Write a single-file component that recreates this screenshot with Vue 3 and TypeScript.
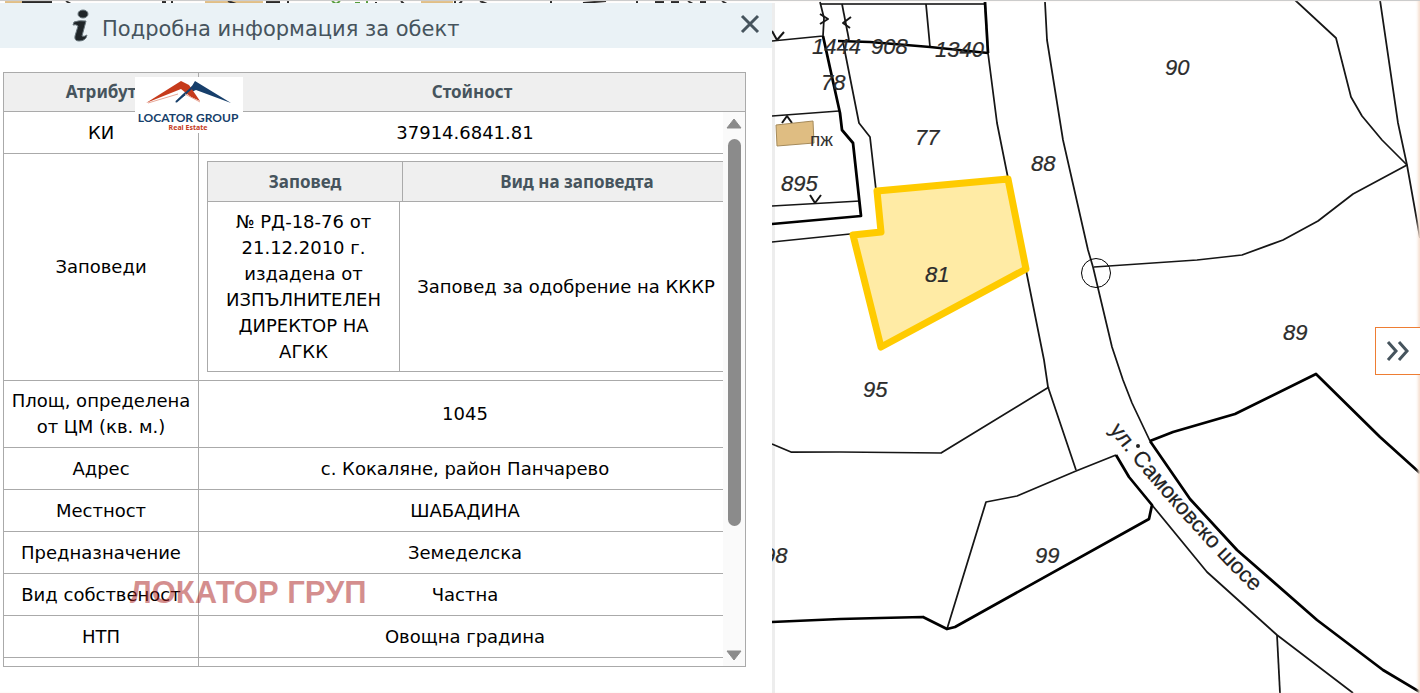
<script setup lang="ts">
interface Row { label: string; value: string }
interface Label { x: number; y: number; text: string }

const rows: Row[] = [
  { label: 'Площ, определена от ЦМ (кв. м.)', value: '1045' },
  { label: 'Адрес', value: 'с. Кокаляне, район Панчарево' },
  { label: 'Местност', value: 'ШАБАДИНА' },
  { label: 'Предназначение', value: 'Земеделска' },
  { label: 'Вид собственост', value: 'Частна' },
  { label: 'НТП', value: 'Овощна градина' },
  { label: '', value: '' },
]

const thinLines: string[] = [
  '820,2 824,18 823,36 772,41',
  '842,4 849,40',
  '843,42 859,123 870,137 876,190',
  '926,4 930,47',
  '988,53 997,123 1008,178',
  '1026,270 1044,360 1048,387 1076,470',
  '1045,2 1047,40 1063,140 1088,250 1093,267 1112,347 1123,380 1132,403 1150,441',
  '772,116 839,111',
  '772,206 860,201',
  '772,242 850,234',
  '1295,0 1336,38 1351,97 1362,116 1382,140 1407,165',
  '1380,0 1398,123 1407,165 1420,238',
  '1407,165 1353,194 1318,221 1283,240 1242,255 1197,260 1094,267',
  '1152,505 1207,572 1247,608 1277,635 1353,693',
  '1277,635 1280,693',
  '1116,455 1076,471 1017,496 986,502 947,629',
  '1049,387 941,453 840,452 791,452 772,444',
]
const thickLines: string[] = [
  '823,36 832,77 840,113 842,130 853,143 861,216 772,224',
  '838,41 870,42 930,47 988,53',
  '985,2 988,53',
  '1150,441 1173,432 1235,414 1316,374 1380,437 1420,473',
  '1150,441 1190,499 1237,550 1317,620 1383,670 1420,692',
  '1116,455 1129,477 1152,505 1149,519 955,627 947,629 923,617 880,618 840,619 772,622',
]
const marks: string[] = [
  '772,31 777,40 784,32',
  '782,123 787,116 792,123',
  '810,195 815,203 821,195',
  '820,14 828,19 820,24',
  '851,17 843,23 850,28',
]
const labels: Label[] = [
  { x: 812, y: 54, text: '1444' },
  { x: 871, y: 54, text: '908' },
  { x: 935, y: 57, text: '1340' },
  { x: 821, y: 90, text: '78' },
  { x: 915, y: 145, text: '77' },
  { x: 1031, y: 171, text: '88' },
  { x: 781, y: 191, text: '895' },
  { x: 1165, y: 75, text: '90' },
  { x: 1283, y: 340, text: '89' },
  { x: 925, y: 282, text: '81' },
  { x: 863, y: 397, text: '95' },
  { x: 1035, y: 563, text: '99' },
  { x: 763, y: 563, text: '98' },
]
</script>

<template>
  <main class="page" lang="bg">
    <svg class="map" viewBox="0 0 1420 693" preserveAspectRatio="xMinYMin slice" role="img" aria-label="Кадастрална карта">
      <g class="scraps">
        <path class="tan" d="M5 1H48V4H5ZM205 1H263V4H205ZM421 1H453V4H421Z" />
        <path class="ink" d="M22 2H52M66 1L71 4M162 2H166M172 1V4M228 1L236 4M266 2H280M288 1V4M376 2V4M401 1L404 4M455 1V4M462 1L459 4M480 1L487 4M551 1V4M583 3L606 1M637 1V4M655 2H664M671 2H679M688 1L693 4M700 2H706M722 1L727 4" />
        <path class="leaf" d="M332 1L336 4L340 1M355 3H360M367 1V4" />
      </g>
      <polyline class="edge" points="821,4 985,4" />
      <polyline v-for="p in thinLines" :key="p" class="thin" :points="p" />
      <polyline v-for="p in thickLines" :key="p" class="thick" :points="p" />
      <polyline v-for="p in marks" :key="p" class="mark" :points="p" />
      <polygon class="building" points="776,125 813,121 814,143 777,146" />
      <polygon class="selected" points="877,191 1008,179 1026,269 881,347 853,235 881,232" />
      <text v-for="l in labels" :key="l.text" class="num" :x="l.x" :y="l.y">{{ l.text }}</text>
      <text class="kind" x="810" y="146">пж</text>
      <path id="street" d="M1109 430L1127 453Q1170 505 1214 552T1277 611" fill="none" />
      <text class="street"><textPath href="#street">ул. Самоковско шосе</textPath></text>
      <circle class="dot" cx="1138" cy="446" r="2" />
      <circle class="cursor" cx="1096" cy="273" r="14.500" />
    </svg>

    <section class="panel">
      <header class="head">
        <svg class="info" viewBox="0 0 18 34" aria-hidden="true">
          <ellipse cx="11" cy="5" rx="5" ry="4" />
          <path d="M2 13Q7 11 14 12L10 27Q12 28 15 26Q14 32 7 32Q2 32 3 27L6 17Q4 15 1 16Z" />
        </svg>
        <h1>Подробна информация за обект</h1>
        <button class="close" type="button" aria-label="Затвори">
          <svg viewBox="0 0 20 20"><path d="M2 2L18 18M18 2L2 18" /></svg>
        </button>
      </header>

      <div class="content">
        <div class="grid">
          <table class="titles">
            <thead><tr><th class="first">Атрибут</th><th>Стойност</th></tr></thead>
          </table>
          <div class="scroll">
            <div class="view">
              <table class="data">
                <tbody>
                  <tr><th class="first" scope="row">КИ</th><td>37914.6841.81</td></tr>
                  <tr>
                    <th class="first" scope="row">Заповеди</th>
                    <td class="holder">
                      <table class="orders">
                        <thead><tr><th class="ohead">Заповед</th><th>Вид на заповедта</th></tr></thead>
                        <tbody>
                          <tr>
                            <td class="order">№ РД-18-76 от 21.12.2010 г. издадена от ИЗПЪЛНИТЕЛЕН ДИРЕКТОР НА АГКК</td>
                            <td class="type">Заповед за одобрение на КККР</td>
                          </tr>
                        </tbody>
                      </table>
                    </td>
                  </tr>
                  <tr v-for="r in rows" :key="r.label"><th class="first" scope="row">{{ r.label }}</th><td>{{ r.value }}</td></tr>
                </tbody>
              </table>
            </div>
            <div class="bar" aria-hidden="true">
              <svg viewBox="0 0 16 12"><path d="M8 1L15 10H1Z" /></svg>
              <div class="track"><div class="thumb"></div></div>
              <svg viewBox="0 0 16 12"><path d="M8 11L15 2H1Z" /></svg>
            </div>
          </div>
        </div>
      </div>
    </section>

    <svg class="logo" viewBox="0 0 108 56" role="img" aria-label="Locator Group">
      <rect width="108" height="56" fill="#fff" />
      <path d="M40 26Q46 18 57 9L60 4L96 26L61 13Q50 17 40 26Z" fill="#173f6b" />
      <path d="M11 26L46 4L54 8L65 24L56 20L46 12Z" fill="#c63b1c" />
      <path d="M41 25L60 8" stroke="#173f6b" stroke-width="2" />
      <path d="M13 26L43 17M50 17L65 25" fill="none" stroke="#e8a797" stroke-width="1" />
      <text class="brand" x="53" y="45">LOCATOR GROUP</text>
      <text class="sub" x="53" y="53">Real Estate</text>
    </svg>
    <div class="watermark">ЛОКАТОР ГРУП</div>

    <button class="expand" type="button" aria-label="Покажи панела">
      <svg viewBox="0 0 24 20"><path d="M2 1L10 10L2 19M13 1L21 10L13 19" /></svg>
    </button>
  </main>
</template>

<style>
body { margin: 0; background: #fff; }
</style>

<style scoped>
* { box-sizing: border-box; }
.page {
  position: relative;
  height: 100vh;
  overflow: hidden;
  padding-top: 3px;
  background: #fff;
  font-family: "DejaVu Sans", Verdana, sans-serif;
  font-size: 18px;
  line-height: 26px;
  color: #000;
}
.page::after {
  content: "";
  position: absolute;
  inset: 0;
  border-top: 1px solid #ccc;
  box-shadow: inset -3px 0 3px -1px #f6dfd0;
  pointer-events: none;
}
.map { position: absolute; inset: 0; width: 100%; height: 100%; }
.thin, .thick, .mark, .edge { fill: none; stroke: #161616; stroke-linejoin: round; }
.thin { stroke-width: 1.75; }
.thick { stroke-width: 2.75; stroke: #000; }
.mark { stroke-width: 2; }
.edge { stroke-width: 2; stroke: #444; }
.tan { fill: #dfbd83; }
.ink { stroke: #222; stroke-width: 2; }
.leaf { stroke: #4e9a34; stroke-width: 2; fill: none; }
.building { fill: #dfbd82; stroke: #a58a5a; }
.selected { fill: #ffeba5; stroke: #ffcb00; stroke-width: 7; stroke-linejoin: round; }
.num { font: italic 22px "Liberation Sans", Arial, sans-serif; fill: #2c2c2c; stroke: #2c2c2c; stroke-width: 0.2; }
.kind { font: 19px "Liberation Sans", Arial, sans-serif; fill: #333; }
.street { font: 22px "Liberation Sans", Arial, sans-serif; fill: #222; stroke: #222; stroke-width: 0.2; }
.dot { fill: #222; }
.cursor { fill: none; stroke: #000; }

.panel {
  position: relative;
  display: flex;
  flex-direction: column;
  width: calc(50% + 62px);
  height: 100%;
  background: #fff;
  box-shadow: 3px 0 0 rgba(0, 0, 0, 0.07);
}
.head {
  display: flex;
  align-items: center;
  height: 45px;
  flex: none;
  padding: 0 12px 0 72px;
  background: #eaf2f6;
  color: #46545d;
}
.info { width: 18px; height: 34px; fill: #1f2528; stroke: #68757b; stroke-width: 1; }
h1 { flex: 1; margin: 6px 0 0 12px; font-size: 21px; line-height: 28px; font-weight: 400; white-space: nowrap; }
.close { padding: 0; border: 0; background: none; height: 20px; margin-bottom: 4px; }
.close svg { display: block; width: 20px; height: 20px; fill: none; stroke: #46545d; stroke-width: 3; }

.content { flex: 1; min-height: 0; padding: 24px 26px 26px 3px; }
.grid { display: flex; flex-direction: column; height: 100%; border: 1px solid #aaa; }
table { border-collapse: separate; border-spacing: 0; table-layout: fixed; }
th, td { padding: 7px; border-bottom: 1px solid #aaa; text-align: center; font-weight: 400; }
.first { width: 195px; border-right: 1px solid #aaa; }
.titles { width: 100%; flex: none; }
thead th { height: 39px; padding: 0 0 2px; background: #efefef; color: #46545d; font: bold 17px "Noto Sans", "DejaVu Sans", sans-serif; }
.scroll { display: flex; flex: 1; min-height: 0; }
.view { flex: 1; min-width: 0; overflow: hidden; }
.data { width: calc(100% + 8px); }
.data > tbody > tr { height: 42px; }
.data > tbody > tr > .first { padding: 7px 0; }
.data > tbody > tr > .holder { padding: 7px 0 8px 8px; }
.orders { display: block; width: 545px; border: 1px solid #aaa; }
.orders thead, .orders tbody { display: table; width: 100%; table-layout: fixed; }
.orders tbody { width: 524px; }
.orders th { height: 40px; padding: 0; }
.orders .ohead { width: 195px; border-right: 1px solid #aaa; }
.orders td { border-bottom: 0; }
.orders .order { width: 192px; border-right: 1px solid #aaa; padding: 7px 6px 6px; }
.orders .type { white-space: nowrap; }
.bar { display: flex; flex-direction: column; align-items: center; width: 22px; flex: none; padding: 6px 0 5px; background: #fafafa; }
.bar svg { width: 16px; height: 12px; flex: none; fill: #8b8b8b; stroke: #8b8b8b; stroke-width: 1; stroke-linejoin: round; }
.track { flex: 1; width: 13px; padding: 9px 0 8px; }
.thumb { height: 77%; border-radius: 7px; background: #8b8b8b; }

.logo { position: absolute; left: 135px; top: 77px; width: 108px; height: 56px; }
.brand { font: bold 12px Lato, sans-serif; fill: #173f6b; text-anchor: middle; }
.sub { font: bold 7px "Noto Sans", sans-serif; fill: #c63b1c; text-anchor: middle; }
.watermark {
  position: absolute;
  left: 130px;
  top: 575px;
  font: bold 31px/36px "Liberation Sans", Arial, sans-serif;
  color: rgba(170, 30, 30, 0.5);
  white-space: nowrap;
}
.expand {
  position: absolute;
  right: 0;
  top: 327px;
  display: grid;
  place-items: center;
  width: 45px;
  height: 48px;
  padding: 0;
  border: 1px solid #ee7d33;
  border-right: 0;
  background: #fff;
  z-index: 1;
}
.expand svg { width: 24px; height: 20px; fill: none; stroke: #46545d; stroke-width: 3; }
</style>
